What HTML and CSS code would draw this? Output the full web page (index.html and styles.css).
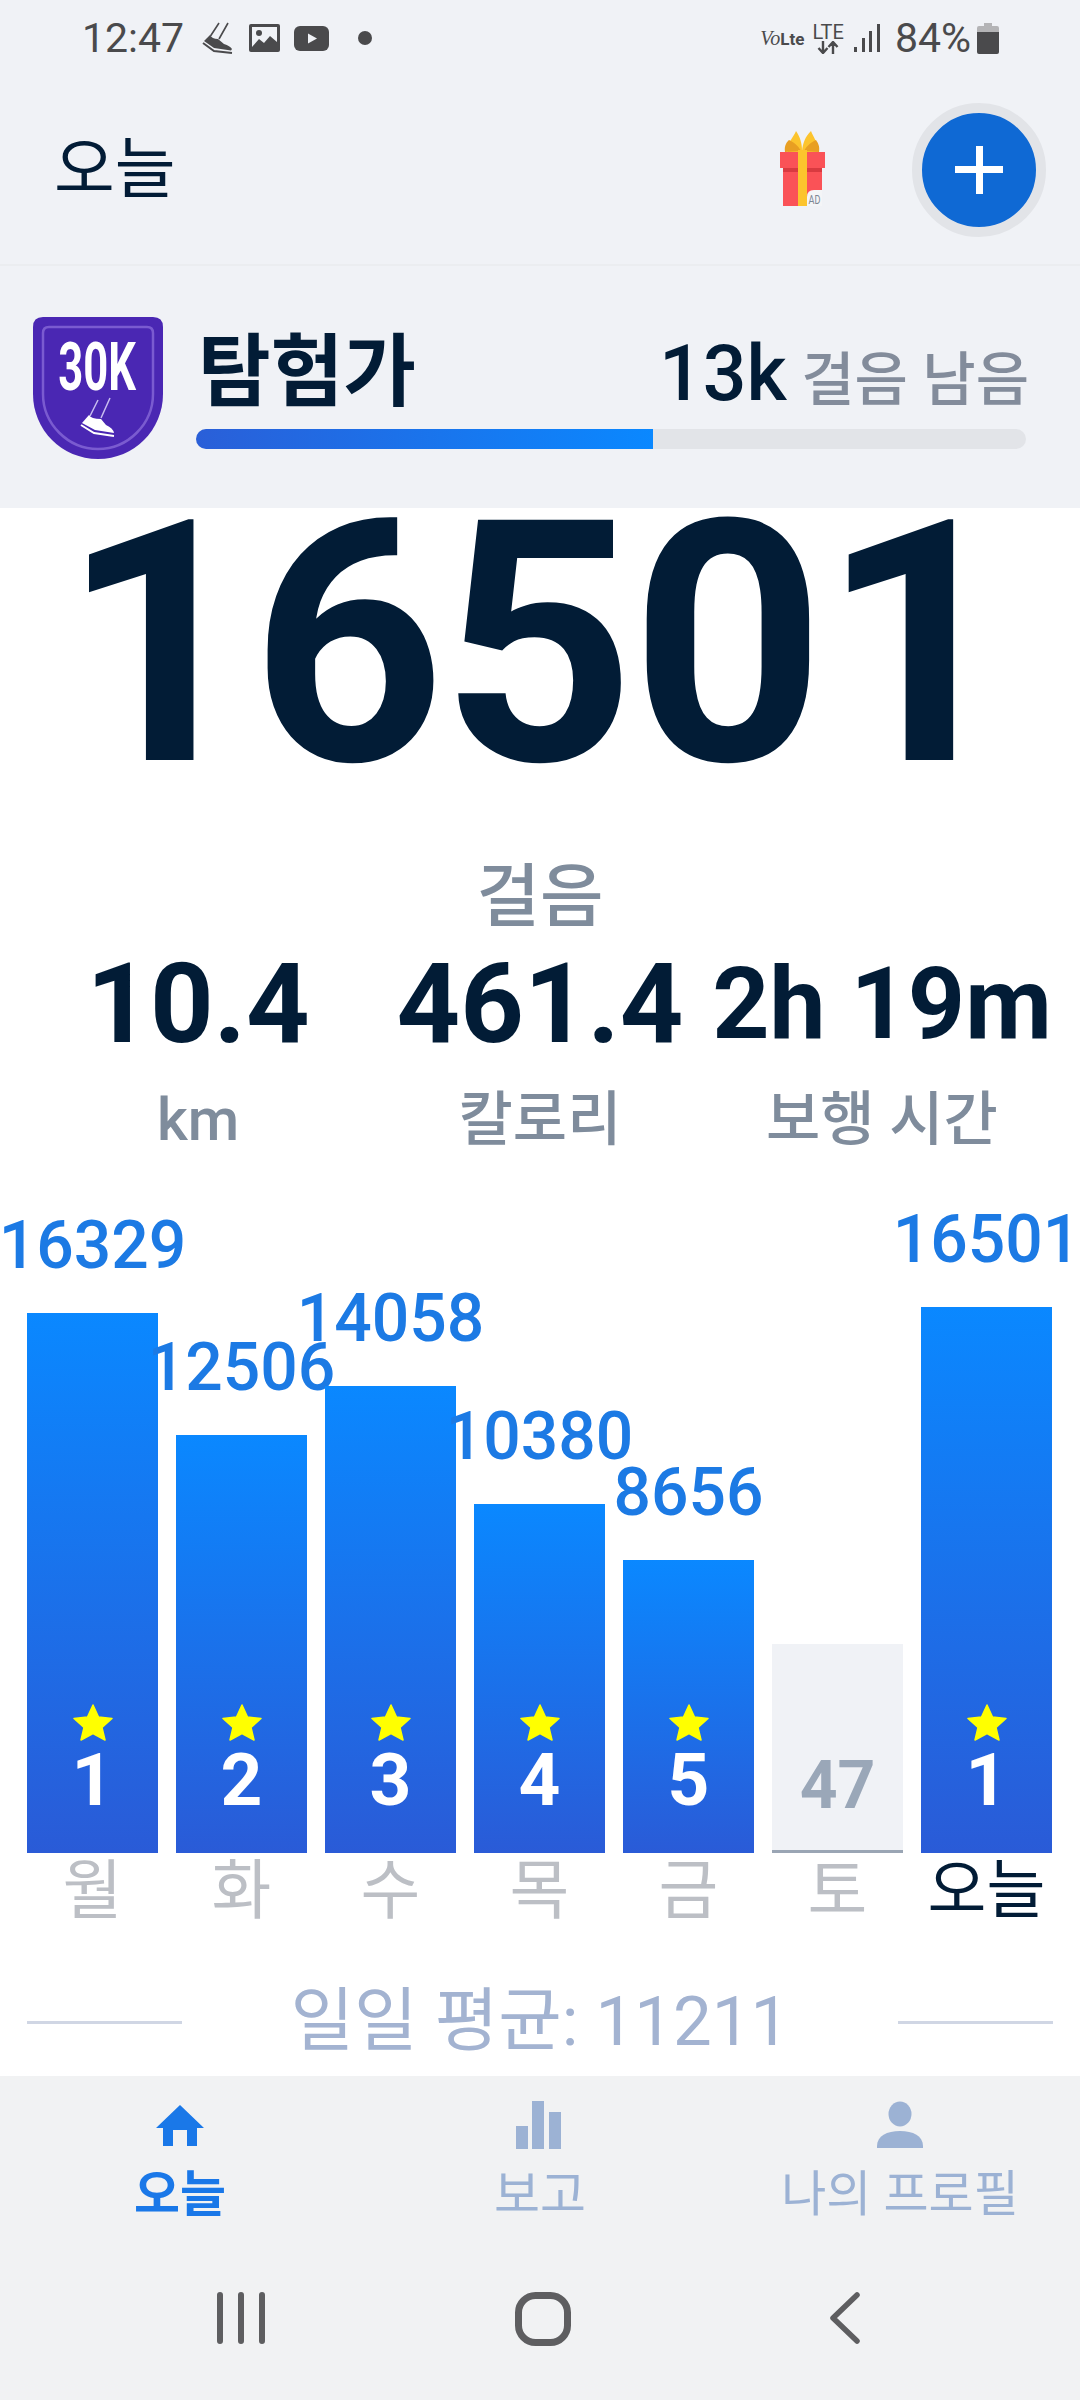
FILE: index.html
```html
<!DOCTYPE html>
<html lang="ko">
<head>
  <meta charset="UTF-8" />
  <meta name="viewport" content="width=device-width, initial-scale=1.0" />
  <title>오늘</title>
  <link rel="stylesheet" href="styles.css">
</head>
<body>
  <div class="screen">
    <div class="top">
      <!-- Status bar -->
      <div class="status">
        <span class="time">12:47</span>
        <svg class="st-shoe" width="31" height="33" viewBox="0 0 31 33">
          <path d="M17 1 L8.500 14 M26 1 L17 17" stroke="#4a4a4c" stroke-width="1.600" fill="none"/>
          <path d="M8 13 Q10 17 16 17 L22 22 Q28 24 30 27 L29 28.500 L12 26 L2 19 Z" fill="#4a4a4c"/>
          <path d="M1 21 L12 29 L30 31" stroke="#4a4a4c" stroke-width="2" fill="none"/>
        </svg>
        <svg class="st-img" width="31" height="28" viewBox="0 0 31 28">
          <rect width="31" height="28" rx="2" fill="#4a4a4c"/>
          <rect x="3" y="3" width="25" height="22" fill="#f0f2f6"/>
          <circle cx="10" cy="9" r="3" fill="#4a4a4c"/>
          <path d="M3 23 L10 15 L15 19 L21 12 L28 18 V25 H3 Z" fill="#4a4a4c"/>
        </svg>
        <svg class="st-yt" width="35" height="25" viewBox="0 0 35 25">
          <rect width="35" height="25" rx="6" fill="#4a4a4c"/>
          <path d="M14 7.500 L23 12.500 L14 17.500 Z" fill="#f0f2f6"/>
        </svg>
        <span class="st-dot"></span>
        <div class="status-right">
          <span class="volte"><i>Vo</i><b>Lte</b></span>
          <span class="lte">
            <span class="lte-text">LTE</span>
            <svg width="22" height="13" viewBox="0 0 22 13">
              <path d="M6 0 V11 M1.500 7 L6 12 L10.500 7 M16 13 V2 M11.500 6 L16 1 L20.500 6" stroke="#4a4a4c" stroke-width="2.400" fill="none"/>
            </svg>
          </span>
          <svg class="st-signal" width="26" height="28" viewBox="0 0 26 28">
            <rect x="0" y="23" width="3" height="5" fill="#4a4a4c"/>
            <rect x="8" y="14" width="3" height="14" fill="#4a4a4c"/>
            <rect x="15" y="7" width="3" height="21" fill="#4a4a4c"/>
            <rect x="23" y="0" width="3" height="28" fill="#4a4a4c"/>
          </svg>
          <span class="battery-pct">84%</span>
          <svg class="st-battery" width="22" height="31" viewBox="0 0 22 31">
            <path d="M7 0 H15 V3 H20 Q22 3 22 5 V9 H0 V5 Q0 3 2 3 H7 Z" fill="#b4b4b6"/>
            <path d="M0 9 H22 V29 Q22 31 20 31 H2 Q0 31 0 29 Z" fill="#4a4a4c"/>
          </svg>
        </div>
      </div>

      <!-- App bar -->
      <div class="appbar">
        <h1 class="page-title">오늘</h1>
        <svg class="gift" width="45" height="75" viewBox="0 0 45 75">
          <path d="M8 22 C6 12 14 6 16 0 C20 6 22 12 22 20 C23 12 25 6 31 0 C33 6 39 12 38 22 Z" fill="#fcc42d"/>
          <path d="M5 21 C4 14 7 11 9 9 C13 11 18 14 21 20 Z M24 20 C27 14 32 11 36 9 C38 12 40 15 39 21 Z" fill="#e89f22"/>
          <rect x="0" y="21" width="45" height="16" fill="#fa5257"/>
          <rect x="3" y="37" width="39" height="38" fill="#fa5257"/>
          <rect x="3" y="37" width="39" height="4" fill="#d93a40"/>
          <rect x="18" y="19" width="9" height="56" fill="#fcc42d"/>
          <path d="M27 75 V66 Q27 59 34 59 H42 V75 Z" fill="#f4f5f7"/>
          <text class="gift-ad" transform="translate(34.500 73) scale(0.7 1)">AD</text>
        </svg>
        <div class="fab"><span class="fab-h"></span><span class="fab-v"></span></div>
      </div>

      <!-- Level card -->
      <div class="level">
        <svg class="badge" width="130" height="142" viewBox="0 0 130 142">
          <path d="M10 0 H120 Q130 0 130 10 V77 C130 113 101 142 65 142 C29 142 0 113 0 77 V10 Q0 0 10 0 Z" fill="#4a27b3"/>
          <path d="M16 10 H114 Q120 10 120 16 V77 C120 107 95 132 65 132 C35 132 10 107 10 77 V16 Q10 10 16 10 Z" fill="none" stroke="#7a5bd0" stroke-width="2.500"/>
          <text class="badge-text" transform="translate(64 73) scale(0.66 1)">30K</text>
          <path d="M65 83 L57 99 M77 81 L68 101" stroke="#c9bdf0" stroke-width="1.500" fill="none"/>
          <path d="M56 98 Q58 102 68 102 L73 108 Q80 111 81 116 L62 113 L49 106 Z" fill="#fff"/>
          <path d="M48 108 L61 116 L81 119" stroke="#fff" stroke-width="2" fill="none"/>
        </svg>
        <div class="level-info">
          <div class="level-row">
            <span class="level-name">탐험가</span>
            <span class="level-left"><b>13k</b> 걸음 남음</span>
          </div>
          <div class="progress"><div class="progress-fill"></div></div>
        </div>
      </div>
    </div>

    <div class="main">
      <div class="big-steps">16501</div>
      <div class="steps-label">걸음</div>

      <div class="stats">
        <div class="stat-value">10.4</div>
        <div class="stat-value">461.4</div>
        <div class="stat-value stat-time">2h 19m</div>
        <div class="stat-label">km</div>
        <div class="stat-label">칼로리</div>
        <div class="stat-label">보행 시간</div>
      </div>

      <div class="chart">
        <div class="col">
          <div class="col-value">16329</div>
          <div class="bar" style="height:540px">
            <svg class="star" viewBox="0 0 40 37"><path d="M20 1 L25.500 13 L39 14.500 L29 23.500 L32 36 L20 29.500 L8 36 L11 23.500 L1 14.500 L14.500 13 Z"/></svg>
            <span class="bar-num">1</span>
          </div>
          <div class="day">월</div>
        </div>
        <div class="col">
          <div class="col-value">12506</div>
          <div class="bar" style="height:418px">
            <svg class="star" viewBox="0 0 40 37"><path d="M20 1 L25.500 13 L39 14.500 L29 23.500 L32 36 L20 29.500 L8 36 L11 23.500 L1 14.500 L14.500 13 Z"/></svg>
            <span class="bar-num">2</span>
          </div>
          <div class="day">화</div>
        </div>
        <div class="col">
          <div class="col-value">14058</div>
          <div class="bar" style="height:467px">
            <svg class="star" viewBox="0 0 40 37"><path d="M20 1 L25.500 13 L39 14.500 L29 23.500 L32 36 L20 29.500 L8 36 L11 23.500 L1 14.500 L14.500 13 Z"/></svg>
            <span class="bar-num">3</span>
          </div>
          <div class="day">수</div>
        </div>
        <div class="col">
          <div class="col-value">10380</div>
          <div class="bar" style="height:349px">
            <svg class="star" viewBox="0 0 40 37"><path d="M20 1 L25.500 13 L39 14.500 L29 23.500 L32 36 L20 29.500 L8 36 L11 23.500 L1 14.500 L14.500 13 Z"/></svg>
            <span class="bar-num">4</span>
          </div>
          <div class="day">목</div>
        </div>
        <div class="col">
          <div class="col-value">8656</div>
          <div class="bar" style="height:293px">
            <svg class="star" viewBox="0 0 40 37"><path d="M20 1 L25.500 13 L39 14.500 L29 23.500 L32 36 L20 29.500 L8 36 L11 23.500 L1 14.500 L14.500 13 Z"/></svg>
            <span class="bar-num">5</span>
          </div>
          <div class="day">금</div>
        </div>
        <div class="col">
          <div class="bar bar-low" style="height:209px">
            <span class="bar-num">47</span>
          </div>
          <div class="day">토</div>
        </div>
        <div class="col">
          <div class="col-value">16501</div>
          <div class="bar" style="height:546px">
            <svg class="star" viewBox="0 0 40 37"><path d="M20 1 L25.500 13 L39 14.500 L29 23.500 L32 36 L20 29.500 L8 36 L11 23.500 L1 14.500 L14.500 13 Z"/></svg>
            <span class="bar-num">1</span>
          </div>
          <div class="day day-today">오늘</div>
        </div>
      </div>

      <div class="average">
        <span class="avg-line"></span>
        <span class="avg-text">일일 평균: 11211</span>
        <span class="avg-line"></span>
      </div>
    </div>

    <div class="bottom">
      <div class="tabs">
        <div class="tab tab-active">
          <svg width="48" height="48" viewBox="0 0 48 48">
            <path d="M24 4 L48 27 H41 V45 H31 V29 H17 V45 H7 V27 H0 Z" fill="#1a78e8"/>
          </svg>
          <span>오늘</span>
        </div>
        <div class="tab">
          <svg width="48" height="48" viewBox="0 0 48 48">
            <rect x="0" y="25" width="12" height="23" fill="#9cb2d4"/>
            <rect x="16" y="0" width="12" height="48" fill="#9cb2d4"/>
            <rect x="33" y="11" width="12" height="37" fill="#9cb2d4"/>
          </svg>
          <span>보고</span>
        </div>
        <div class="tab">
          <svg width="48" height="48" viewBox="0 0 48 48">
            <ellipse cx="24" cy="13" rx="11.500" ry="12.500" fill="#9cb2d4"/>
            <path d="M1 47 V45 C1 35 11 30 24 30 C37 30 47 35 47 45 V47 Z" fill="#9cb2d4"/>
          </svg>
          <span class="tab-long">나의 프로필</span>
        </div>
      </div>
      <div class="sysnav">
        <svg width="50" height="52" viewBox="0 0 50 52">
          <path d="M4 3 V49 M25 3 V49 M46 3 V49" stroke="#5e5e60" stroke-width="6" stroke-linecap="round"/>
        </svg>
        <svg width="56" height="54" viewBox="0 0 56 54">
          <rect x="3.500" y="3.500" width="49" height="47" rx="17" fill="none" stroke="#5e5e60" stroke-width="7"/>
        </svg>
        <svg width="32" height="52" viewBox="0 0 32 52">
          <path d="M28 3 L4 26 L28 49" fill="none" stroke="#5e5e60" stroke-width="5.500" stroke-linecap="round" stroke-linejoin="round"/>
        </svg>
      </div>
    </div>
  </div>
</body>
</html>
```

FILE: styles.css
```css
/* Global styles */
* {
  box-sizing: border-box;
}
body {
  margin: 0;
  background: #fff;
  color: #021c36;
  font-family: Roboto, "Noto Sans CJK KR", sans-serif;
}
.screen {
  width: 1080px;
  height: 2400px;
  display: flex;
  flex-direction: column;
  overflow: hidden;
}

/* Top area */
.top {
  height: 508px;
  background: #f0f2f6;
}
.status {
  height: 76px;
  padding: 0 81px 0 82px;
  display: flex;
  align-items: center;
  color: #4a4a4c;
}
.time {
  font-size: 41px;
  line-height: 46px;
  margin-right: 18px;
}
.st-img {
  margin-left: 16px;
}
.st-yt {
  margin-left: 14px;
}
.st-dot {
  width: 14px;
  height: 14px;
  margin-left: 29px;
  border-radius: 50%;
  background: #4a4a4c;
}
.status-right {
  margin-left: auto;
  display: flex;
  align-items: center;
}
.volte {
  line-height: 20px;
  display: flex;
  align-items: baseline;
}
.volte i {
  font-family: "Liberation Serif", serif;
  font-size: 20px;
}
.volte b {
  font-size: 17px;
}
.lte {
  margin-left: 8px;
  display: flex;
  flex-direction: column;
  align-items: center;
}
.lte-text {
  font-size: 20px;
  line-height: 18px;
}
.st-signal {
  margin-left: 10px;
}
.battery-pct {
  margin-left: 15px;
  font-size: 41px;
  line-height: 46px;
}
.st-battery {
  margin-left: 6px;
}

.appbar {
  height: 188px;
  padding: 0 34px 0 54px;
  display: flex;
  align-items: center;
}
.page-title {
  margin: 0;
  font-size: 66px;
  font-weight: 400;
  line-height: 70px;
}
.gift {
  margin: 0 87px 3px auto;
}
.gift-ad {
  font-family: Roboto, sans-serif;
  font-size: 13px;
  fill: #7d8794;
  text-anchor: middle;
}
.fab {
  position: relative;
  width: 134px;
  height: 134px;
  border-radius: 50%;
  background: #0f69d4;
  border: 10px solid #e2e4e8;
}
.fab-h,
.fab-v {
  position: absolute;
  background: #fff;
}
.fab-h {
  left: 33px;
  top: 53px;
  width: 48px;
  height: 7px;
}
.fab-v {
  left: 54px;
  top: 33px;
  width: 7px;
  height: 48px;
}

.level {
  height: 244px;
  padding: 51px 54px 0 33px;
  border-top: 2px solid #ebedf0;
  display: flex;
  gap: 33px;
}
.badge {
  flex: none;
}
.badge-text {
  font-family: Roboto, sans-serif;
  font-size: 66px;
  font-weight: 700;
  fill: #fff;
  text-anchor: middle;
}
.level-info {
  flex: 1;
}
.level-row {
  display: flex;
  justify-content: space-between;
  align-items: baseline;
  padding: 14px 0 0 2px;
  height: 112px;
}
.level-name {
  font-size: 79px;
  font-weight: 700;
  line-height: 84px;
}
.level-left {
  margin-right: -3px;
  font-size: 58px;
  font-weight: 500;
  line-height: 84px;
  color: #838c9b;
}
.level-left b {
  font-size: 77px;
  font-weight: 500;
  color: #021c36;
}
.progress {
  height: 20px;
  border-radius: 10px;
  background: #e2e4e8;
  overflow: hidden;
}
.progress-fill {
  width: 457px;
  height: 100%;
  background: linear-gradient(to right, #2a5fd8, #0a88ff);
}

/* Main content */
.main {
  flex: 1;
  display: flex;
  flex-direction: column;
}
.big-steps {
  padding-right: 8px;
  font-size: 338px;
  font-weight: 700;
  letter-spacing: -4px;
  line-height: 274px;
  text-align: center;
}
.steps-label {
  margin-top: 76px;
  font-size: 69px;
  font-weight: 500;
  line-height: 80px;
  text-align: center;
  color: #7f8c9c;
}
.stats {
  padding: 4px 27px 0;
  display: grid;
  grid-template-columns: repeat(3, 1fr);
  align-items: center;
}
.stat-value {
  height: 124px;
  font-size: 111px;
  font-weight: 700;
  line-height: 124px;
  text-align: center;
  white-space: nowrap;
}
.stat-time {
  font-size: 100px;
}
.stat-label {
  margin-top: 19px;
  font-size: 59px;
  font-weight: 500;
  line-height: 70px;
  text-align: center;
  color: #7f8c9c;
}

/* Week chart */
.chart {
  margin-top: auto;
  padding: 0 28px 0 27px;
  display: grid;
  grid-template-columns: repeat(7, 131px);
  gap: 18px;
  align-items: end;
}
.col {
  display: flex;
  flex-direction: column;
  align-items: center;
}
.col-value {
  margin-bottom: 32px;
  font-size: 66px;
  font-weight: 500;
  line-height: 70px;
  white-space: nowrap;
  color: #1c7ae4;
}
.bar {
  width: 100%;
  padding-bottom: 43px;
  display: flex;
  flex-direction: column;
  justify-content: flex-end;
  align-items: center;
  background: linear-gradient(to bottom, #0a88ff, #2a5bd7);
}
.bar-low {
  padding-bottom: 34px;
  background: #f0f2f6;
  border-bottom: 3px solid #9aa5b4;
}
.star {
  width: 40px;
  height: 37px;
  margin-bottom: 9px;
  fill: #ffff00;
  stroke: #ffff00;
  stroke-width: 1.5;
  stroke-linejoin: round;
}
.bar-num {
  font-size: 73px;
  font-weight: 700;
  line-height: 60px;
  color: #fff;
}
.bar-low .bar-num {
  font-size: 66px;
  color: #9aa7b8;
}
.day {
  height: 76px;
  font-size: 65px;
  line-height: 76px;
  white-space: nowrap;
  color: #bcbfc5;
}
.day-today {
  font-size: 64px;
  color: #021c36;
}

.average {
  height: 147px;
  padding: 39px 27px 0;
  display: flex;
  justify-content: space-between;
  align-items: center;
}
.avg-line {
  width: 155px;
  height: 3px;
  background: #d0d6e4;
}
.avg-text {
  font-size: 69px;
  line-height: 80px;
  color: #a3b3d1;
}

/* Bottom navigation */
.bottom {
  height: 324px;
  background: #f1f2f3;
}
.tabs {
  height: 189px;
  padding-top: 25px;
  display: grid;
  grid-template-columns: repeat(3, 1fr);
}
.tab {
  display: flex;
  flex-direction: column;
  align-items: center;
  gap: 16px;
  font-size: 50px;
  line-height: 60px;
  color: #9cb2d4;
}
.tab-long {
  font-size: 49px;
}
.tab-active {
  font-weight: 700;
  color: #1a78e8;
}
.sysnav {
  padding: 27px 0 0 90px;
  display: grid;
  grid-template-columns: repeat(3, 302px);
  justify-items: center;
}
```
